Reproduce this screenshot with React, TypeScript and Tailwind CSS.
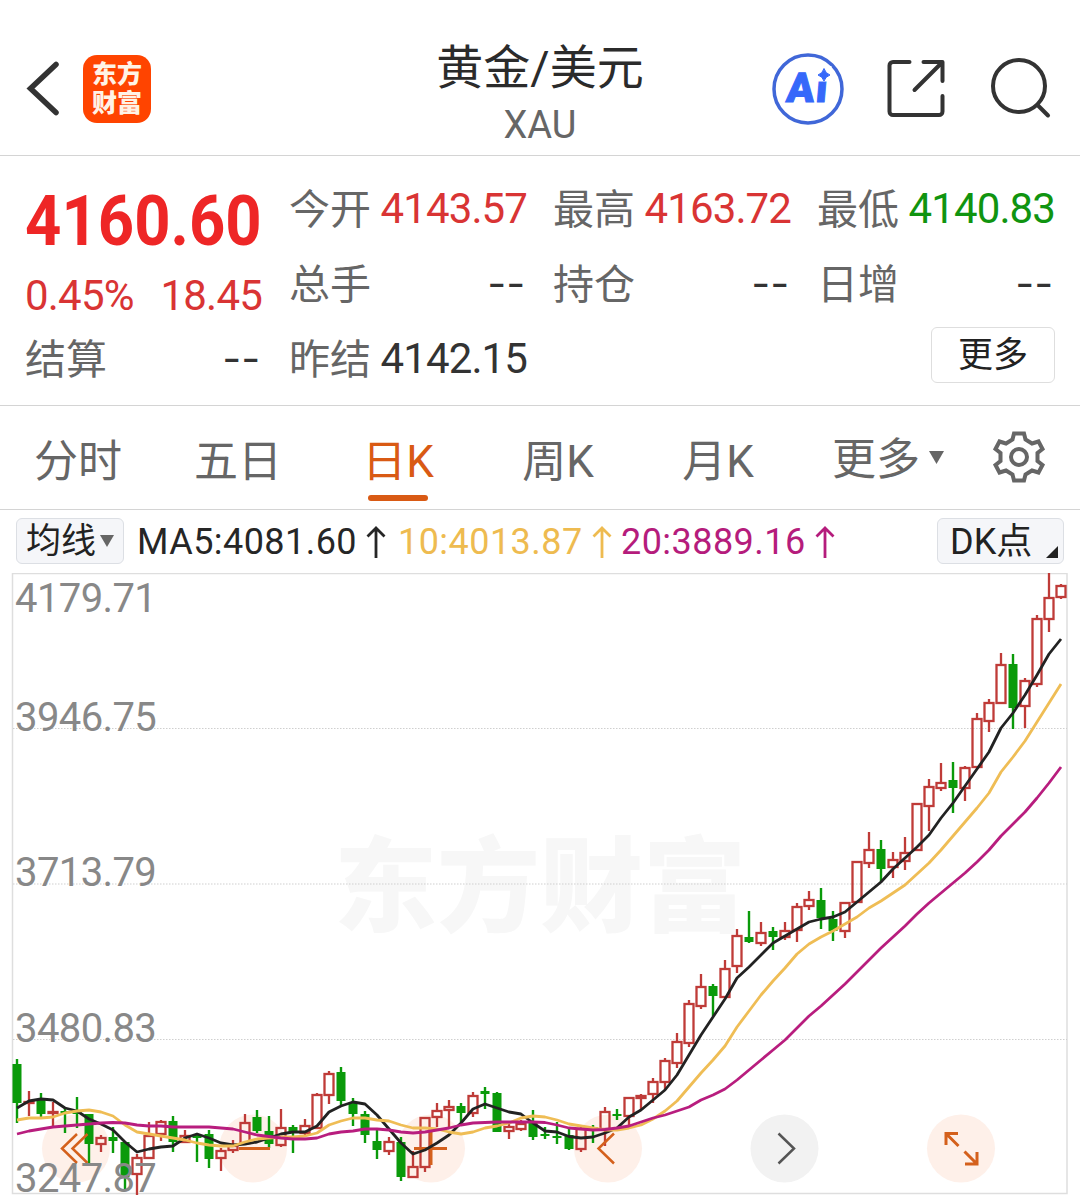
import type { ReactNode } from 'react';

// [high, body top, body bottom, low, up (1) / down (0)]
type Candle = [number, number, number, number, 0 | 1];

const candles: Candle[] = [
  [1059, 1064, 1103, 1123, 0], [1091, 1102, 1103, 1116, 1], [1093, 1100, 1114, 1117, 0], [1102, 1112, 1113, 1126, 1],
  [1108, 1111, 1113, 1133, 0], [1097, 1112, 1114, 1128, 0], [1114, 1114, 1144, 1163, 0], [1135, 1138, 1144, 1152, 1],
  [1127, 1137, 1141, 1153, 0], [1142, 1142, 1177, 1189, 0], [1154, 1158, 1174, 1195, 1], [1122, 1136, 1158, 1158, 1],
  [1120, 1122, 1134, 1141, 1], [1116, 1121, 1142, 1152, 0], [1130, 1136, 1142, 1143, 1], [1133, 1135, 1138, 1162, 0],
  [1130, 1134, 1159, 1168, 0], [1148, 1151, 1158, 1171, 1], [1140, 1146, 1150, 1153, 1], [1114, 1123, 1143, 1144, 1],
  [1110, 1117, 1131, 1133, 0], [1116, 1131, 1144, 1148, 0], [1109, 1128, 1145, 1147, 1], [1125, 1127, 1132, 1153, 0],
  [1119, 1126, 1133, 1137, 1], [1093, 1095, 1128, 1129, 1], [1071, 1074, 1095, 1104, 1], [1067, 1072, 1101, 1105, 0],
  [1098, 1103, 1114, 1126, 0], [1111, 1114, 1135, 1143, 0], [1130, 1141, 1150, 1159, 0], [1137, 1142, 1151, 1155, 1],
  [1137, 1142, 1177, 1181, 0], [1151, 1167, 1177, 1178, 1], [1117, 1118, 1167, 1172, 1], [1103, 1111, 1117, 1127, 1],
  [1100, 1107, 1110, 1127, 1], [1103, 1106, 1113, 1122, 0], [1092, 1096, 1113, 1117, 1], [1087, 1091, 1094, 1109, 0],
  [1092, 1093, 1132, 1132, 0], [1124, 1127, 1131, 1139, 1], [1120, 1124, 1129, 1131, 1], [1110, 1122, 1137, 1140, 0],
  [1127, 1134, 1136, 1139, 0], [1122, 1136, 1138, 1144, 0], [1129, 1135, 1149, 1150, 0], [1127, 1129, 1149, 1152, 1],
  [1125, 1127, 1130, 1143, 0], [1107, 1112, 1129, 1146, 1], [1109, 1114, 1116, 1120, 0], [1097, 1098, 1116, 1125, 1],
  [1094, 1096, 1098, 1110, 1], [1078, 1082, 1094, 1103, 1], [1058, 1061, 1082, 1090, 1], [1033, 1042, 1063, 1068, 1],
  [1000, 1004, 1043, 1047, 1], [974, 987, 1006, 1009, 1], [984, 986, 996, 1016, 0], [960, 969, 997, 998, 1],
  [929, 936, 966, 973, 1], [911, 937, 942, 943, 0], [922, 933, 943, 946, 1], [927, 931, 937, 950, 0],
  [922, 931, 937, 940, 1], [903, 907, 930, 942, 1], [891, 900, 906, 910, 1], [888, 900, 918, 929, 0],
  [911, 919, 931, 941, 0], [902, 903, 931, 938, 1], [861, 862, 902, 902, 1], [832, 850, 863, 868, 1],
  [840, 849, 869, 882, 0], [852, 860, 867, 878, 1], [837, 853, 861, 870, 1], [803, 804, 850, 850, 1],
  [779, 787, 806, 831, 1], [763, 783, 788, 791, 1], [762, 780, 788, 813, 0], [766, 768, 788, 801, 1],
  [713, 719, 767, 768, 1], [699, 703, 721, 732, 1], [653, 665, 703, 704, 1], [654, 664, 708, 729, 0],
  [678, 681, 706, 728, 1], [615, 619, 684, 687, 1], [573, 598, 619, 632, 1], [584, 586, 597, 599, 1],
];

const ma5 = [
  1108, 1101, 1099, 1100, 1108, 1111, 1119, 1124, 1130, 1142, 1152, 1149, 1147, 1146, 1138, 1134, 1138, 1143, 1145, 1144, 1142, 1138,
  1134, 1132, 1132, 1126, 1112, 1106, 1102, 1104, 1115, 1129, 1143, 1154, 1150, 1143, 1135, 1123, 1109, 1104, 1108, 1112, 1114, 1123,
  1131, 1132, 1136.5, 1138, 1137, 1133, 1128, 1117, 1110, 1100, 1090, 1075, 1055, 1035, 1017, 999, 978, 967, 955, 943, 936, 929,
  922, 919, 917, 912, 902, 892, 882, 869, 858, 847, 835, 818, 803, 786, 769, 752, 728, 713, 695, 675, 654, 639,
];

const ma10 = [
  1120, 1118, 1118, 1117, 1113, 1111, 1110, 1112, 1116, 1125, 1132, 1134, 1136, 1138, 1140, 1143, 1145, 1146, 1146, 1142, 1139, 1138,
  1137, 1137, 1136, 1133, 1125, 1121, 1118, 1118, 1120, 1121, 1125, 1128, 1128, 1129, 1132, 1134, 1132, 1128, 1126, 1123, 1118, 1116,
  1117, 1120, 1124, 1126, 1128, 1130, 1130, 1128, 1125, 1119, 1111, 1101, 1087, 1073, 1060, 1046, 1027, 1011, 995, 981, 968, 954,
  944, 937, 931, 924, 917, 908, 901, 893, 885, 874, 863, 850, 836, 822, 808, 793, 772, 757, 741, 722, 703, 684,
];

const ma20 = [
  1134, 1131, 1129, 1127, 1126, 1125, 1124, 1123, 1122.5, 1123, 1125, 1126, 1126, 1127, 1127, 1127, 1127, 1128, 1129, 1132, 1135, 1136.5,
  1138, 1139, 1139, 1138, 1134, 1132, 1131, 1129, 1129, 1130, 1132, 1133, 1132, 1130, 1128, 1125, 1123, 1122.5, 1122, 1122, 1122, 1122,
  1122.5, 1125, 1128, 1129, 1130, 1129.5, 1128, 1126, 1122, 1118, 1115, 1111, 1107, 1100, 1095, 1089, 1080, 1070, 1060, 1050, 1040, 1028,
  1016, 1006, 995, 984, 972, 960, 948, 937, 926, 914, 903, 893, 883, 873, 862, 850, 836, 824, 812, 798, 783, 767,
];

const axisLabels = [
  { value: '4179.71', y: 612 },
  { value: '3946.75', y: 730.5 },
  { value: '3713.79', y: 885.5 },
  { value: '3480.83', y: 1041.5 },
  { value: '3247.87', y: 1192 },
];

const candleX = (index: number) => 17 + index * 12;
const toPoints = (values: number[]) => values.map((y, i) => `${candleX(i)},${y}`).join(' ');

function Header() {
  return (
    <header className="flex h-[156px] items-center border-b border-[#d4d4d4]">
      <svg className="ml-6 mt-[21px]" width="40" height="60" viewBox="0 0 40 60" fill="none">
        <path d="M32 6.5 6.5 30.500 32 54.500" stroke="#333" strokeWidth="5.500" strokeLinecap="round" />
      </svg>
      <div className="ml-[19px] mt-[22px] flex h-[68px] w-[68px] flex-col items-center justify-center rounded-[14px] bg-[#ff4400] text-[25px] font-black leading-[29px] text-[#fff3e6]">
        <span>东方</span>
        <span>财富</span>
      </div>
      <div className="ml-[239px] mt-[36px] flex w-[300px] flex-col items-center">
        <h1 className="text-[47px] leading-[56px] text-[#2b2b2b]">黄金/美元</h1>
        <p className="mt-[2px] text-[38px] leading-[54px] text-[#666]">XAU</p>
      </div>
      <div className="ml-[81px] mt-[22px] flex items-center">
        <svg width="74" height="74" viewBox="0 0 74 74">
          <circle cx="37" cy="37" r="34" fill="#fff" stroke="#4067d8" strokeWidth="3.500" />
          <text x="19" y="50" fontSize="41" fontWeight="900" letterSpacing="1.5" fill="#3568fa" stroke="#3568fa" strokeWidth="1" transform="skewX(-5)">
            Ai
          </text>
          <rect x="44.500" y="14" width="16" height="15.500" fill="#fff" />
          <path d="M53 16.500Q54.500 21.500 59 23 54.500 24.500 53 29 51.500 24.500 47 23 51.500 21.500 53 16.500Z" fill="#3568fa" stroke="#3568fa" />
        </svg>
        <svg className="ml-[41px]" width="62" height="62" viewBox="0 0 62 62" fill="none" stroke="#333" strokeWidth="4" strokeLinecap="round" strokeLinejoin="round">
          <path d="M23.500 4H7a3.500 3.500 0 0 0-3.500 3.500V53.500a3.500 3.500 0 0 0 3.500 3.500H53a3.500 3.500 0 0 0 3.500-3.500V38" />
          <path d="M37.500 4H56.500V23M56 4.500 28.500 32" />
        </svg>
        <svg className="ml-[42px]" width="64" height="64" viewBox="0 0 64 64" fill="none" stroke="#333" strokeWidth="4" strokeLinecap="round">
          <circle cx="29" cy="29" r="26" />
          <path d="M47.500 48 58 58.500" />
        </svg>
      </div>
    </header>
  );
}

function Quote({ label, value, color = 'text-[#333]' }: { label: string; value: string; color?: string }) {
  return (
    <div className="flex h-[60px] items-center justify-between">
      <span className="pt-[5px] text-[41px] text-[#666]">{label}</span>
      {value === '--' ? (
        <span className="origin-right scale-x-[1.3] text-[42px] tracking-[3px] text-[#333]">--</span>
      ) : (
        <span className={`text-[42px] tracking-[-0.9px] ${color}`}>{value}</span>
      )}
    </div>
  );
}

function QuotePanel() {
  return (
    <section className="flex h-[250px] gap-[27px] border-b border-[#d4d4d4] pl-[25px] pt-[22px]">
      <div className="w-[237px]">
        <div className="mt-[5px] h-[76px] origin-left scale-x-[0.893] whitespace-nowrap text-[71px] font-bold leading-[76px] text-[#ee2626]">
          4160.60
        </div>
        <div className="mt-[9px] flex h-[54px] items-center justify-between whitespace-nowrap text-[42px] tracking-[-0.8px] text-[#d93434]">
          <span>0.45%</span>
          <span>18.45</span>
        </div>
        <div className="mt-[6px]">
          <Quote label="结算" value="--" />
        </div>
      </div>
      <div className="flex w-[238px] flex-col gap-[15px]">
        <Quote label="今开" value="4143.57" color="text-[#d93434]" />
        <Quote label="总手" value="--" />
        <Quote label="昨结" value="4142.15" />
      </div>
      <div className="-ml-px flex w-[238px] flex-col gap-[15px]">
        <Quote label="最高" value="4163.72" color="text-[#d93434]" />
        <Quote label="持仓" value="--" />
      </div>
      <div className="-ml-px flex w-[238px] flex-col gap-[15px]">
        <Quote label="最低" value="4140.83" color="text-[#109410]" />
        <Quote label="日增" value="--" />
        <button className="mt-[-1px] h-[56px] w-[124px] self-end rounded-md border border-[#dedede] text-[35px] leading-[56px] text-[#222]">
          更多
        </button>
      </div>
    </section>
  );
}

function Tab({ children, active = false }: { children: ReactNode; active?: boolean }) {
  return (
    <div className={`flex w-40 flex-col items-center pt-[26px] ${active ? 'text-[#d95a14]' : 'text-[#666]'}`}>
      <span className="text-[44px] leading-[60px]">{children}</span>
      {active && <span className="mt-[3px] h-[6px] w-[60px] rounded-full bg-[#d95a14]" />}
    </div>
  );
}

function Tabs() {
  return (
    <nav className="flex h-[104px] border-b border-[#d4d4d4]">
      <div className="-ml-[2px] flex">
        <Tab>分时</Tab>
        <Tab>五日</Tab>
        <Tab active>日K</Tab>
        <Tab>周K</Tab>
        <Tab>月K</Tab>
      </div>
      <div className="ml-[34px] flex items-center text-[44px] text-[#666]">
        <span className="pt-[5px]">更多</span>
        <svg className="ml-[9px]" width="15" height="13" viewBox="0 0 15 13" fill="#666">
          <path d="M0 0H15L7.500 13Z" />
        </svg>
      </div>
      <svg className="ml-[47px] mt-[23px]" width="56" height="56" viewBox="-28 -28 56 56" fill="none" stroke="#666" strokeWidth="4">
        <path d="M-5-23.500H5L6.500-17.500 13-13.500 19.500-15.500 23.500-8 18.500-4V4L23.500 8 19.500 15.500 13 13.500 6.500 17.500 5 23.500H-5L-6.500 17.500-13 13.500-19.500 15.500-23.500 8-18.500 4V-4L-23.500-8-19.500-15.500-13-13.500-6.500-17.500Z" />
        <circle r="8" />
      </svg>
    </nav>
  );
}

function Average({ text, className }: { text: string; className: string }) {
  return (
    <span className={`flex items-center gap-[9px] whitespace-nowrap text-[36px] tracking-[0.45px] ${className}`}>
      {text}
      <svg width="20" height="34" viewBox="0 0 20 34" fill="none" stroke="currentColor" strokeWidth="2.800">
        <path d="M10 33V3M1.500 11.500 10 3 18.500 11.500" />
      </svg>
    </span>
  );
}

function AverageBar() {
  return (
    <div className="flex h-[63px] items-center px-4 pb-0.5">
      <button className="flex h-[46px] w-[108px] items-center justify-center rounded-md border border-[#dcdfe4] bg-[#f5f6f9] text-[35px] text-[#222]">
        <span className="pt-[4px]">均线</span>
        <svg className="ml-1" width="14" height="12" viewBox="0 0 14 12" fill="#666">
          <path d="M0 0H14L7 12Z" />
        </svg>
      </button>
      <Average text="MA5:4081.60" className="ml-[13px] w-[261px] pt-[3px] text-[#262626]" />
      <Average text="10:4013.87" className="w-[223px] pt-[3px] text-[#eebb50]" />
      <Average text="20:3889.16" className="pt-[3px] text-[#b51c7c]" />
      <button className="relative ml-auto flex h-[46px] w-[127px] items-center rounded-md border border-[#dcdfe4] bg-[#f5f6f9] pl-[12px] pt-[3px] text-[36px] text-[#222]">
        DK点
        <svg className="absolute bottom-[5px] right-[5px]" width="12" height="12" viewBox="0 0 12 12" fill="#222">
          <path d="M12 0V12H0Z" />
        </svg>
      </button>
    </div>
  );
}

function Chart() {
  return (
    <svg className="block" width="1080" height="622" viewBox="0 573 1080 622" fill="none">
      <text x="334" y="924" fontSize="103" fontWeight="900" fill="#f7f7f7">
        东方财富
      </text>
      <rect x="12.500" y="573.500" width="1054.500" height="620" stroke="#dedede" strokeWidth="1.500" />
      {[728.5, 884, 1039.5].map((y) => (
        <path key={y} d={`M13 ${y}H1067`} stroke="#cfcfcf" strokeDasharray="1.500 1.500" />
      ))}

      {/* round chart controls */}
      {[76, 253, 431, 608, 961].map((cx) => (
        <circle key={cx} cx={cx} cy="1148.500" r="34" fill="#fef0e9" />
      ))}
      <circle cx="784.500" cy="1148.500" r="34" fill="#f2f2f2" />

      {candles.map(([high, top, bottom, low, up], i) => {
        const x = candleX(i);
        return up ? (
          <g key={i} stroke="#bf3b38" strokeWidth="2.300">
            <path d={`M${x} ${high}V${top}M${x} ${bottom}V${low}`} />
            <rect x={x - 4.5} y={top} width="9" height={bottom - top} />
          </g>
        ) : (
          <g key={i} fill="#0a9a0a">
            <rect x={x - 1.2} y={high} width="2.400" height={low - high} />
            <rect x={x - 4.5} y={top} width="9" height={bottom - top} />
          </g>
        );
      })}

      <g strokeWidth="3" stroke="#d4601c">
        <path d="M77 1134 62 1148.500 77 1163M87.500 1134 72.500 1148.500 87.500 1163" strokeWidth="2.500" />
        <path d="M239 1148.500H270" />
        <path d="M414 1148.500H447M431 1131V1165" />
        <path d="M614 1133.500 598.500 1148.500 614 1163.500" strokeWidth="2.500" />
        <path d="M946 1145V1133.500H958M946 1133.500 958.500 1146M977 1152V1164H965M977 1164 964.500 1151.500" />
        <path d="M778.500 1133.500 794 1148.500 778.500 1163.500" stroke="#555" strokeWidth="2.500" />
      </g>

      <g strokeWidth="2.800" strokeLinejoin="round">
        <polyline points={toPoints(ma5)} stroke="#222" />
        <polyline points={toPoints(ma10)} stroke="#efbd55" />
        <polyline points={toPoints(ma20)} stroke="#b81d7e" />
      </g>

      {axisLabels.map(({ value, y }) => (
        <text key={value} x="15" y={y} fontSize="40" letterSpacing="-0.6" fill="#888">
          {value}
        </text>
      ))}
    </svg>
  );
}

export default function App() {
  return (
    <div className="h-[1195px] w-[1080px] overflow-hidden bg-white font-[Roboto,'Noto_Sans_CJK_SC',sans-serif]">
      <Header />
      <QuotePanel />
      <Tabs />
      <AverageBar />
      <Chart />
    </div>
  );
}
